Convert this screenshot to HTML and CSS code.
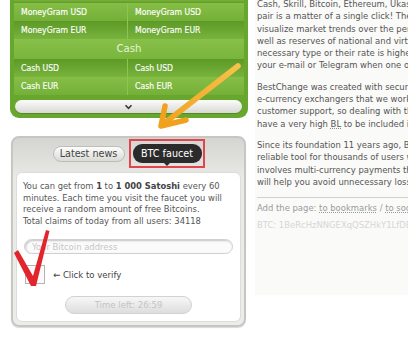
FILE: index.html
```html
<!DOCTYPE html>
<html lang="en">
<head>
<meta charset="utf-8">
<title>BestChange</title>
<link rel="stylesheet" href="styles.css">
</head>
<body>
<div class="page">
  <aside class="sidebar">
    <div class="rates">
      <div class="tail"></div>
      <div class="row light"><span class="cell">MoneyGram USD</span><span class="cell">MoneyGram USD</span></div>
      <div class="row dark"><span class="cell">MoneyGram EUR</span><span class="cell">MoneyGram EUR</span></div>
      <div class="group">Cash</div>
      <div class="row dark"><span class="cell">Cash USD</span><span class="cell">Cash USD</span></div>
      <div class="row light"><span class="cell">Cash EUR</span><span class="cell">Cash EUR</span></div>
      <div class="more">
        <div class="more-bar">
          <svg class="chevron" width="9" height="6" viewBox="0 0 9 6"><path d="M1.5 1.2 L4.5 4.3 L7.5 1.2" fill="none" stroke="#3a3a3a" stroke-width="1.6"/></svg>
        </div>
      </div>
    </div>

    <div class="faucet">
      <div class="tabs">
        <span class="tab">Latest news</span>
        <span class="mark"><span class="tab active">BTC faucet</span></span>
      </div>
      <div class="faucet-body">
        <p class="faucet-text">You can get from <b>1</b> to <b>1 000 Satoshi</b> every 60<br>minutes. Each time you visit the faucet you will<br>receive a random amount of free Bitcoins.<br>Total claims of today from all users: 34118</p>
        <input class="address" type="text" placeholder="Your Bitcoin address">
        <label class="verify"><span class="box"></span><span>← Click to verify</span></label>
        <button class="timer" type="button" disabled>Time left: 26:59</button>
      </div>
    </div>
  </aside>

  <main class="content">
    <div class="text">
      <p>Cash, Skrill, Bitcoin, Ethereum, Ukash and others), so finding the best<br>pair is a matter of a single click! The rate charts will help you<br>visualize market trends over the period from an hour to a year, as<br>well as reserves of national and virtual currencies. If there is no<br>necessary type or their rate is higher than you need, we will notify<br>your e-mail or Telegram when one of them appears.</p>
      <p>BestChange was created with security as the top priority. All the<br>e-currency exchangers that we work with are checked by our<br>customer support, so dealing with them is safe. The exchangers must<br>have a very high <span class="abbr">BL</span> to be included in our list.</p>
      <p>Since its foundation 11 years ago, BestChange has become a<br>reliable tool for thousands of users whose day-to-day work<br>involves multi-currency payments that our monitoring service<br>will help you avoid unnecessary losses.</p>
    </div>
    <hr class="rule">
    <div class="share">Add the page: <a class="dotted" href="#">to bookmarks</a> / <a class="dotted" href="#">to social networks</a></div>
    <div class="btc">BTC: 1BeRcHzNNGEXqQSZHkY1LfDE9vUfKEYp6d</div>
  </main>
</div>

<svg class="annotations" width="408" height="350" viewBox="0 0 408 350">
  <defs>
    <linearGradient id="og" x1="238" y1="66" x2="162" y2="126" gradientUnits="userSpaceOnUse">
      <stop offset="0" stop-color="#f7c24a"/>
      <stop offset="1" stop-color="#f0a11e"/>
    </linearGradient>
  </defs>
  <path d="M238 66 L166 122" stroke="url(#og)" stroke-width="5.5" stroke-linecap="round" fill="none"/>
  <path d="M165 106 L161 126 L186 120" stroke="#f0a11e" stroke-width="5.5" stroke-linecap="round" stroke-linejoin="round" fill="none"/>
  <path d="M14 253 L18 250 L33 276 L46 230 L49.5 231 L36 286 L31 286 Z" fill="#e2252d"/>
</svg>
</body>
</html>
```
FILE: styles.css
```css
* { box-sizing: border-box; }

html, body { margin: 0; padding: 0; }

body {
  width: 408px;
  height: 350px;
  overflow: hidden;
  position: relative;
  background: #ffffff;
  color: #555555;
  font-family: "DejaVu Sans Condensed", "DejaVu Sans", sans-serif;
  font-stretch: condensed;
}

.page {
  display: flex;
  align-items: flex-start;
}

/* ---------- sidebar ---------- */
.sidebar {
  flex: none;
  width: 238px;
  margin-left: 10px;
}

.rates {
  background: #68a72d;
  border: 4px solid #68a72d;
  border-top: 0;
  border-radius: 0 0 9px 9px;
}

.tail {
  height: 3px;
  background: linear-gradient(#78b33c, #5e9b26);
}

.row {
  display: grid;
  grid-template-columns: 113px 1fr;
  height: 18px;
}

.row.light { background: linear-gradient(#86be46, #74b038); }
.row.dark  { background: linear-gradient(#5c9926, #78b33d); }

.cell {
  padding-left: 7px;
  line-height: 18px;
  font-size: 8.6px;
  color: #ffffff;
  white-space: nowrap;
  -webkit-text-stroke: 0.15px #ffffff;
}

.cell + .cell {
  border-left: 1px solid #8cc456;
}

.group {
  height: 20px;
  line-height: 20px;
  text-align: center;
  font-size: 11.3px;
  color: #e6f2d4;
  background: linear-gradient(#88c04a, #79b53c);
}

.more {
  padding: 5px 2px 1px 1px;
}

.more-bar {
  height: 13px;
  border-radius: 7px;
  background: linear-gradient(#fcfcfb, #d8d8d4);
  box-shadow: 0 1px 0 rgba(0, 0, 0, 0.18);
  display: flex;
  justify-content: center;
  align-items: center;
}

/* ---------- faucet ---------- */
.faucet {
  margin: 18px 2px 0 1px;
  border: 2px solid #c6c6c2;
  border-radius: 8px;
  background: linear-gradient(#d4d4d0, #e9e9e6 40px, #ececea);
  padding: 0 3px 3px;
  box-shadow: 0 1px 1px rgba(0, 0, 0, 0.15);
}

.tabs {
  display: flex;
  justify-content: center;
  align-items: center;
  gap: 4px;
  height: 29px;
  margin-top: 1px;
}

.tab {
  display: block;
  width: 72px;
  height: 16px;
  line-height: 14px;
  text-align: center;
  border: 1px solid #bdbdb9;
  border-radius: 8px;
  background: linear-gradient(#fdfdfc, #d9d9d5);
  font-size: 10.7px;
  color: #444444;
  white-space: nowrap;
}

.mark {
  display: block;
  border: 2px solid #e2434f;
  padding: 3px 1px 3px 2px;
}

.tab.active {
  position: relative;
  width: 69px;
  height: 19px;
  line-height: 19px;
  border: 0;
  border-radius: 9px;
  background: #2b2b2b;
  color: #ffffff;
}

.tab.active::after {
  content: "";
  position: absolute;
  left: 50%;
  bottom: -3px;
  margin-left: -3px;
  border-left: 3px solid transparent;
  border-right: 3px solid transparent;
  border-top: 3px solid #2b2b2b;
}

.faucet-body {
  margin-top: 4px;
  height: 150px;
  background: #ffffff;
  border: 1px solid #dcdcd8;
  border-radius: 6px;
  padding: 7px 6px;
}

.faucet-text {
  margin: 0;
  font-size: 9.3px;
  line-height: 11.7px;
  color: #555555;
  white-space: nowrap;
}

.faucet-text b { color: #444444; }

.address {
  display: block;
  width: 209px;
  height: 15px;
  margin: 12px 0 0 1px;
  padding: 0 7px;
  border: 1px solid #d0d0d0;
  border-radius: 8px;
  box-shadow: inset 1px 1px 2px rgba(0, 0, 0, 0.22);
  background: #fbfbfb;
  font-family: inherit;
  font-stretch: condensed;
  font-size: 9.4px;
  color: #555555;
  outline: none;
}

.address::placeholder { color: #c6c6c6; }

.verify {
  display: flex;
  align-items: center;
  gap: 8px;
  margin: 11px 0 0 2px;
  font-size: 9.5px;
  color: #444444;
}

.box {
  width: 20px;
  height: 19px;
  border: 1px solid #b4b4b4;
  background: #fafafa;
}

.timer {
  display: block;
  width: 127px;
  height: 18px;
  margin: 12px auto 0;
  padding: 0;
  border: 1px solid #d2d2d2;
  border-radius: 9px;
  background: linear-gradient(#f7f7f7, #dddddd);
  font-family: inherit;
  font-stretch: condensed;
  font-size: 9.5px;
  color: #c4c4c4;
}

/* ---------- content ---------- */
.content {
  flex: none;
  width: 300px;
  height: 295px;
  margin-left: 7px;
  padding-left: 2px;
  background: #fafaf9;
  font-size: 9.4px;
  line-height: 12.3px;
  color: #555555;
  white-space: nowrap;
}

.text { margin-top: -2px; }

.text p { margin: 0 0 9px; }

.abbr {
  text-decoration: underline dotted #888888;
}

.rule {
  margin: 2px 0 0;
  border: 0;
  border-top: 1px solid #d0d0d0;
  height: 0;
}

.share {
  margin-top: 4px;
  color: #9a9a9a;
}

.dotted {
  color: #9a9a9a;
  text-decoration: underline dotted #9a9a9a;
}

.btc {
  margin-top: 5px;
  color: #d6d6d6;
}

/* ---------- annotations overlay ---------- */
.annotations {
  position: absolute;
  top: 0;
  left: 0;
  pointer-events: none;
}
```
